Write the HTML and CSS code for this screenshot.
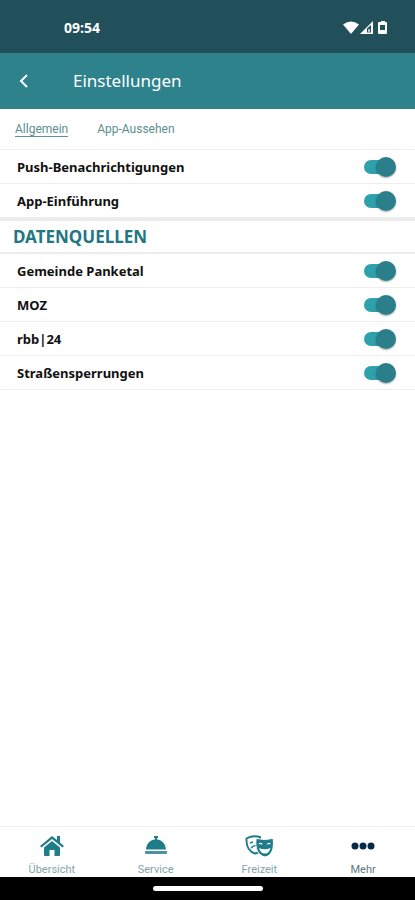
FILE: index.html
```html
<!DOCTYPE html>
<html lang="de">
<head>
<meta charset="utf-8">
<meta name="viewport" content="width=device-width, initial-scale=1">
<title>Einstellungen</title>
<link rel="stylesheet" href="styles.css">
</head>
<body>
<div class="status">
  <span class="clock">09:54</span>
  <span class="status-icons">
    <svg width="46" height="16" viewBox="0 0 46 16" fill="#fff" aria-hidden="true">
      <path d="M0 4.500Q8 -1.500 16 4.500L8 14Z"/>
      <path d="M17 14L30 1V14Z"/>
      <path fill="#214f5a" d="M24 12.500V8.500L28 5V12.500Z"/>
      <path fill="#b5c6ca" d="M25 9H27V12.500H25Z"/>
      <path fill-rule="evenodd" d="M38 1H42V2H43Q44 2 44 3V13Q44 14 43 14H36Q35 14 35 13V3Q35 2 36 2H38ZM37 5V10H42V5Z"/>
    </svg>
  </span>
</div>
<header class="bar">
  <button class="back" type="button" aria-label="Zurück">
    <svg width="10" height="14" viewBox="0 0 10 14" fill="none" stroke="#fff" stroke-width="2" aria-hidden="true"><path d="M8 1L2 7L8 13"/></svg>
  </button>
  <h1>Einstellungen</h1>
</header>
<nav class="tabs">
  <a class="tab active" href="#allgemein">Allgemein</a>
  <a class="tab" href="#aussehen">App-Aussehen</a>
</nav>
<main id="allgemein">
  <section class="group">
    <label class="row">Push-Benachrichtigungen<input class="switch" type="checkbox" role="switch" checked></label>
    <label class="row">App-Einführung<input class="switch" type="checkbox" role="switch" checked></label>
  </section>
  <h2>DATENQUELLEN</h2>
  <section class="group">
    <label class="row">Gemeinde Panketal<input class="switch" type="checkbox" role="switch" checked></label>
    <label class="row">MOZ<input class="switch" type="checkbox" role="switch" checked></label>
    <label class="row">rbb|24<input class="switch" type="checkbox" role="switch" checked></label>
    <label class="row">Straßensperrungen<input class="switch" type="checkbox" role="switch" checked></label>
  </section>
</main>
<nav class="bottom">
  <a href="#start">
    <svg width="26" height="22" viewBox="0 0 26 22" fill="#1f7d8a" aria-hidden="true">
      <path d="M1 11L13 1L18 5V1H21V7.500L25 11L23.500 12.500L13 4L2.500 12.500Z"/>
      <path d="M5 12.500L13 6L21 12.500V20Q21 21 20 21H15.500V15H10.500V21H6Q5 21 5 20Z"/>
    </svg>
    <span>Übersicht</span>
  </a>
  <a href="#service">
    <svg width="26" height="22" viewBox="0 0 26 22" fill="#1f7d8a" aria-hidden="true">
      <path d="M11 1H15V3H14V4.500C19.500 5 22.500 9 23 14.500H3C3.500 9 6.500 5 12 4.500V3H11Z"/>
      <path fill="#4d939d" d="M2 16H24V18Q24 19 23 19H3Q2 19 2 18Z"/>
    </svg>
    <span>Service</span>
  </a>
  <a href="#freizeit">
    <svg width="30" height="22" viewBox="0 0 30 22" aria-hidden="true">
      <path d="M2.500 3.500Q8.500 0 16 2V17L11 18.500C6 17 2 12 2.500 3.500Z" fill="#fff" stroke="#1f7d8a" stroke-width="2" stroke-linejoin="round"/>
      <path d="M6 8L9 7M7 13Q9 10.500 12 10.500" stroke="#1f7d8a" stroke-width="1.500" fill="none"/>
      <path d="M12 4.500Q12 3.500 13 3.500Q20.500 5.500 28 3.500Q29.300 3.500 29.300 4.500C30 13 28.500 20.500 21 22C13.500 20.500 11 13 12 4.500Z" fill="#1f7d8a" stroke="#fff" stroke-width="1"/>
      <path d="M14.500 9Q17 6.500 19 9.500ZM22.500 9.500Q24.500 6.500 27 9ZM15 13Q21 15.500 26.500 13Q25 18.500 21 18.500Q16.500 18.500 15 13Z" fill="#fff"/>
    </svg>
    <span>Freizeit</span>
  </a>
  <a class="more" href="#mehr">
    <svg width="26" height="22" viewBox="0 0 26 22" fill="#082a49" aria-hidden="true"><circle cx="5" cy="11" r="3.500"/><circle cx="13" cy="11" r="3.500"/><circle cx="21" cy="11" r="3.500"/></svg>
    <span>Mehr</span>
  </a>
</nav>
<footer class="system"><span class="pill"></span></footer>
</body>
</html>
```
FILE: styles.css
```css
* { box-sizing: border-box; }
body {
  margin: 0;
  min-height: 100vh;
  display: flex;
  flex-direction: column;
  background: #fff;
  font-family: "Noto Sans", sans-serif;
}
a { color: inherit; text-decoration: none; }
.status {
  height: 53px;
  padding: 2px 26px 0 64px;
  display: flex;
  align-items: center;
  justify-content: space-between;
  background: #214f5a;
  color: #fff;
}
.clock { font: 700 14px/20px "Open Sans", sans-serif; }
.status-icons { display: flex; }
.bar {
  height: 56px;
  padding: 0 16px;
  display: flex;
  align-items: center;
  gap: 41px;
  background: #2e828c;
  color: #fff;
}
.back {
  width: 16px;
  height: 32px;
  padding: 0;
  border: 0;
  display: flex;
  align-items: center;
  justify-content: center;
  background: none;
}
h1 { margin: 0; font-size: 17px; line-height: 24px; font-weight: 400; }
.tabs {
  height: 41px;
  padding: 13px 15px 0;
  display: flex;
  align-items: flex-start;
  gap: 29px;
  border-bottom: 1px solid #eee;
  color: #5b8f8d;
  font-family: Roboto, sans-serif;
  font-size: 12px;
  line-height: 14px;
}
.tab { border-bottom: 1px solid transparent; }
.tab.active { border-color: #5b9593; }
main { flex: 1; }
.row {
  height: 34px;
  padding: 0 19px 0 17px;
  display: flex;
  align-items: center;
  justify-content: space-between;
  border-bottom: 1px solid #eee;
  color: #111;
  font-size: 13px;
  line-height: 18px;
  font-weight: 700;
}
.switch {
  appearance: none;
  flex: none;
  width: 32px;
  height: 20px;
  margin: 0;
  position: relative;
}
.switch::before {
  content: "";
  position: absolute;
  left: 0;
  top: 3px;
  width: 26px;
  height: 14px;
  border-radius: 7px;
  background: #2fa1ac;
}
.switch::after {
  content: "";
  position: absolute;
  right: 0;
  top: 0;
  width: 20px;
  height: 20px;
  border-radius: 50%;
  background: #2a7f8b;
  box-shadow: 0 1px 2px #0005;
}
h2 {
  height: 36px;
  margin: 0;
  padding: 0 13px;
  border: solid #ececec;
  border-width: 3px 0 2px;
  color: #237783;
  font-size: 17px;
  line-height: 32px;
  font-weight: 700;
}
.bottom {
  height: 51px;
  padding-top: 8px;
  display: grid;
  grid-template-columns: repeat(4, 1fr);
  border-top: 1px solid #eee;
  color: #84a5a6;
  font: 400 11px/14px Roboto, sans-serif;
}
.bottom a {
  display: flex;
  flex-direction: column;
  align-items: center;
  gap: 6px;
}
.bottom .more { color: #60797f; }
.system {
  height: 23px;
  display: flex;
  align-items: center;
  justify-content: center;
  background: #000;
}
.pill { width: 110px; height: 5px; border-radius: 3px; background: #fff; }
```
